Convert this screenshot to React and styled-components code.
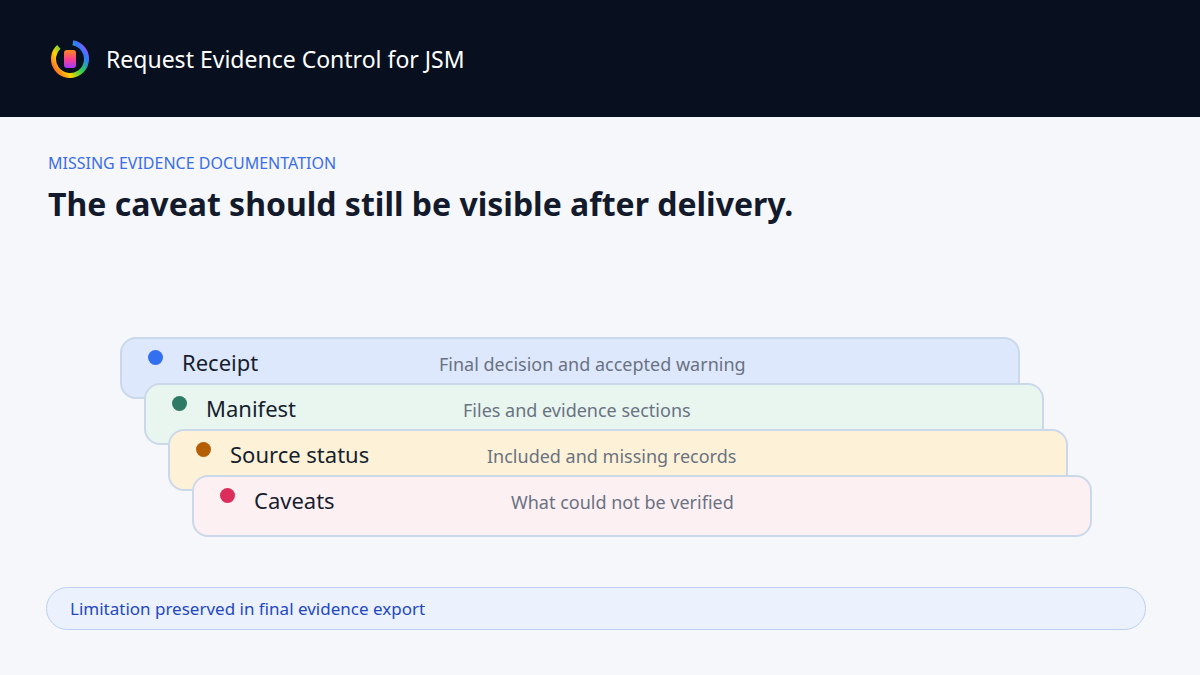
import React from "react";
import styled, { createGlobalStyle } from "styled-components";

const Global = createGlobalStyle`
  body { margin: 0; background: #f5f7fb; font-family: "Noto Sans", "Open Sans", sans-serif; }
`;

const Page = styled.div`
  width: 1200px;
  height: 675px;
  display: flex;
  flex-direction: column;
  overflow: hidden;
`;

const Header = styled.header`
  height: 117px;
  background: #08101f;
  display: flex;
  align-items: center;
  gap: 16px;
  padding-left: 50px;
  box-sizing: border-box;
`;

const Title = styled.div`
  color: #fff;
  font-size: 23px;
`;

const Main = styled.main`
  padding: 34px 48px 0;
  display: flex;
  flex-direction: column;
`;

const Eyebrow = styled.div`
  color: #3a6ee8;
  font-size: 16px;
  line-height: 24px;
`;

const Heading = styled.h1`
  margin: 8px 0 0;
  font-size: 32px;
  font-weight: 700;
  color: #131a2b;
  line-height: 42px;
`;

const Stack = styled.div`
  margin-top: 112px;
  display: flex;
  flex-direction: column;
  height: 200px;
`;

const Card = styled.div`
  width: 900px;
  height: 62px;
  box-sizing: border-box;
  margin-left: ${(p) => 72 + p.$i * 24}px;
  margin-top: ${(p) => (p.$i ? -16 : 0)}px;
  background: ${(p) => p.$bg};
  border: 2px solid #cbd8ea;
  border-radius: 16px;
  display: grid;
  grid-template-columns: 15px 238px 1fr;
  column-gap: 19px;
  align-items: center;
  padding: 0 26px 12px;
  position: relative;
`;

const Dot = styled.span`
  width: 15px;
  height: 15px;
  border-radius: 50%;
  background: ${(p) => p.$c};
  margin-top: -10px;
`;

const Label = styled.span`
  font-size: 22px;
  color: #171e2e;
`;

const Desc = styled.span`
  font-size: 18px;
  color: #6a7282;
  margin-top: 4px;
`;

const Pill = styled.div`
  margin-top: 50px;
  margin-left: -2px;
  width: 1100px;
  height: 43px;
  box-sizing: border-box;
  background: #ebf2fd;
  border: 1px solid #bcd0ee;
  border-radius: 22px;
  display: flex;
  align-items: center;
  padding-left: 23px;
  color: #2448c0;
  font-size: 17px;
`;

const rows = [
  ["Receipt", "Final decision and accepted warning", "#dde8fc", "#3370f0"],
  ["Manifest", "Files and evidence sections", "#e8f6ef", "#2e7a62"],
  ["Source status", "Included and missing records", "#fdf2d8", "#b45f06"],
  ["Caveats", "What could not be verified", "#fdf0f3", "#dc2d5c"],
];

function Logo() {
  return (
    <svg width="40" height="40" viewBox="0 0 40 40">
      <defs>
        <linearGradient id="ring" x1="0" y1="0" x2="1" y2="1">
          <stop offset="0" stopColor="#ff3b3b" />
          <stop offset="0.3" stopColor="#ffd400" />
          <stop offset="0.55" stopColor="#2fd34a" />
          <stop offset="0.8" stopColor="#2b7bff" />
          <stop offset="1" stopColor="#e03bff" />
        </linearGradient>
        <linearGradient id="core" x1="0" y1="0" x2="0" y2="1">
          <stop offset="0" stopColor="#ff8a1f" />
          <stop offset="0.5" stopColor="#ff3f8a" />
          <stop offset="1" stopColor="#a23bff" />
        </linearGradient>
      </defs>
      <circle cx="20" cy="20" r="16.5" fill="none" stroke="url(#ring)" strokeWidth="5" strokeDasharray="88 16" transform="rotate(-80 20 20)" />
      <rect x="14" y="11" width="12" height="18" rx="3" fill="url(#core)" />
    </svg>
  );
}

export default function App() {
  return (
    <>
      <Global />
      <Page>
        <Header>
          <Logo />
          <Title>Request Evidence Control for JSM</Title>
        </Header>
        <Main>
          <Eyebrow>MISSING EVIDENCE DOCUMENTATION</Eyebrow>
          <Heading>The caveat should still be visible after delivery.</Heading>
          <Stack>
            {rows.map(([l, d, bg, c], i) => (
              <Card key={l} $i={i} $bg={bg}>
                <Dot $c={c} />
                <Label>{l}</Label>
                <Desc>{d}</Desc>
              </Card>
            ))}
          </Stack>
          <Pill>Limitation preserved in final evidence export</Pill>
        </Main>
      </Page>
    </>
  );
}
